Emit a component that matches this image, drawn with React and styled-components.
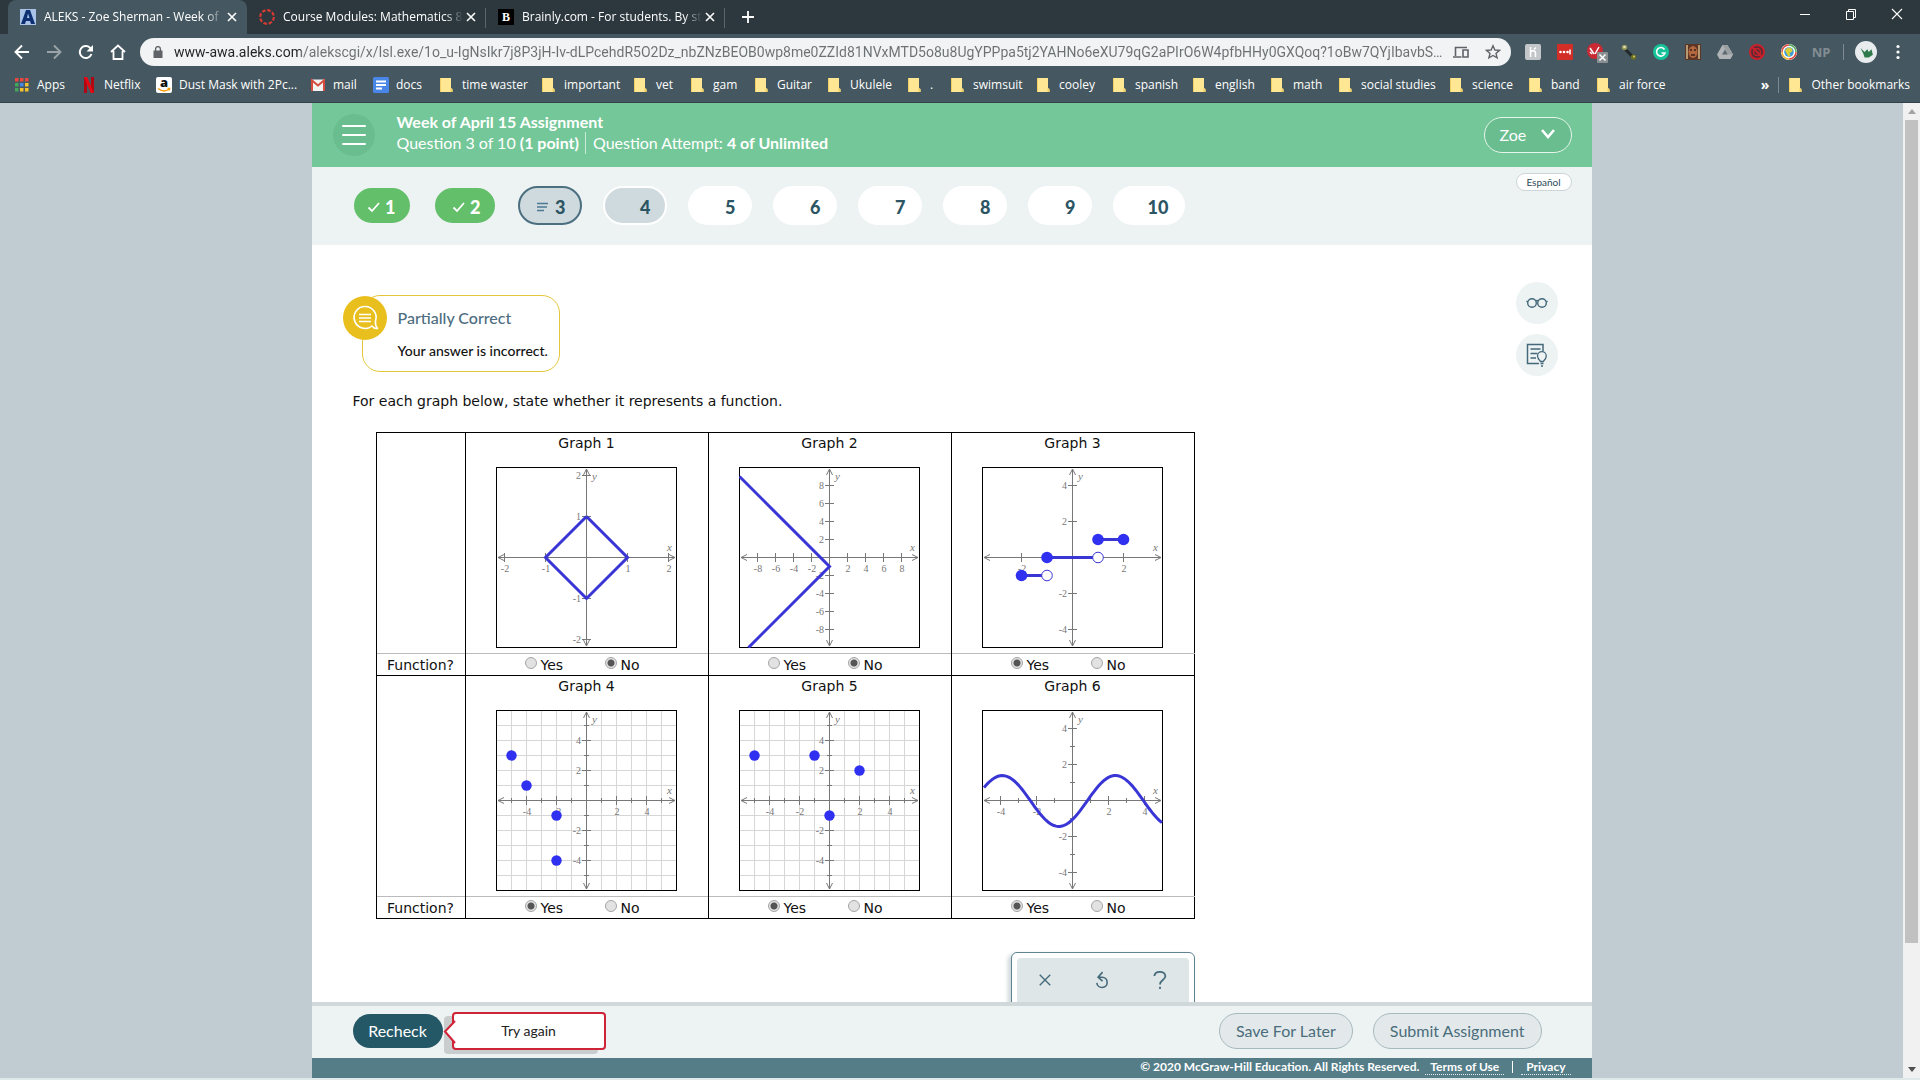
import React, { useState } from "react";
import styled, { createGlobalStyle, css } from "styled-components";

const ui = `"Open Sans", "Noto Sans", sans-serif`;
const brand = `Lato, "Open Sans", sans-serif`;
const verdana = `"DejaVu Sans", Verdana, sans-serif`;

const GlobalStyle = createGlobalStyle`
  *, *::before, *::after { box-sizing: border-box; }
  body { margin: 0; background: #e3ebec; }
  button { border: 0; padding: 0; margin: 0; background: none; font: inherit; color: inherit; cursor: pointer; }
  svg { display: block; }
`;

const Window = styled.div`
  display: flex;
  flex-direction: column;
  height: 100vh;
  border-bottom: 2px solid #dfe9ea;
  background: #c0ccd2;
`;

/* ---------- browser chrome ---------- */

const TabStrip = styled.div`
  display: flex;
  height: 34px;
  padding-left: 8px;
  background: #2c373e;
  font: 12px/16px ${ui};
  color: #fff;
`;

const Tab = styled.div`
  position: relative;
  display: flex;
  align-items: center;
  width: 239px;
  padding: 0 7px 0 12px;
  ${(p) =>
    p.$active
      ? css`
          background: #455760;
          border-radius: 8px 8px 0 0;
        `
      : css`
          &::after {
            content: "";
            position: absolute;
            right: 0;
            top: 8px;
            height: 20px;
            width: 1px;
            background: #59666d;
          }
        `}
`;

const TabTitle = styled.span`
  flex: 1;
  min-width: 0;
  margin-left: 8px;
  overflow: hidden;
  white-space: nowrap;
  mask-image: linear-gradient(90deg, #000 90%, transparent);
`;

const TabButton = styled.button`
  display: grid;
  place-items: center;
  width: 16px;
  height: 16px;
`;

const NewTab = styled.button`
  display: grid;
  place-items: center;
  width: 46px;
`;

const WindowControls = styled.div`
  display: flex;
  margin-left: auto;
  height: 28px;
`;

const WindowButton = styled.button`
  display: grid;
  place-items: center;
  width: 46px;
`;

const Toolbar = styled.div`
  display: flex;
  align-items: center;
  height: 36px;
  padding: 0 6px;
  background: #455760;
  color: #fff;
`;

const ToolButton = styled.button`
  display: grid;
  place-items: center;
  flex: none;
  width: 32px;
  height: 28px;
  opacity: ${(p) => (p.$dim ? 0.45 : 1)};
`;

const Omnibox = styled.div`
  display: flex;
  align-items: center;
  flex: 1;
  height: 28px;
  margin: 0 6px;
  padding: 0 2px 0 12px;
  border-radius: 14px;
  background: #f1f3f4;
  color: #5f6368;
`;

const UrlInput = styled.input`
  flex: 1;
  min-width: 0;
  margin-left: 10px;
  padding: 0;
  border: 0;
  outline: 0;
  font: 14px/20px Roboto, ${ui};
  text-overflow: ellipsis;
  color: transparent;
  background: linear-gradient(90deg, #202124 127px, #6c7073 127px);
  background-clip: text;
  -webkit-background-clip: text;
`;

const Divider = styled.span`
  width: 1px;
  height: 16px;
  margin: 0 ${(p) => p.$gap}px;
  background: #7d8a91;
`;

const Bookmarks = styled.nav`
  display: flex;
  align-items: center;
  height: 33px;
  padding: 0 10px 2px 14px;
  border-bottom: 1px solid #32414a;
  background: #455760;
  color: #fff;
  font: 12px/16px ${ui};
`;

const Bookmark = styled.a`
  display: flex;
  align-items: center;
  gap: 7px;
  flex: none;
  width: ${(p) => (p.$w ? p.$w + "px" : "auto")};
  color: inherit;
  text-decoration: none;
  white-space: nowrap;
`;

const Overflow = styled.button`
  margin-left: auto;
  font: 700 14px/16px ${ui};
`;

const Sv = ({ s = 16, children, ...r }) => (
  <svg width={s} height={s} viewBox="0 0 16 16" fill="none" stroke="currentColor" strokeWidth="1.6" aria-hidden="true" {...r}>
    {children}
  </svg>
);

const FolderIcon = () => (
  <Sv stroke="none">
    <path d="M1 1h11v10l1.500 1v3H1z" fill="#ffe793" />
    <path d="M1 1h1v14H1zM11.500 11.500l2 .5v3h-2z" fill="#f2cf62" />
  </Sv>
);

const AppsIcon = () => (
  <Sv stroke="none">
    {["#e8483f", "#e8483f", "#e8483f", "#43a65a", "#4a86e8", "#f2c230", "#43a65a", "#f2c230", "#f2c230"].map((c, i) => (
      <rect key={i} x={1 + (i % 3) * 5} y={1 + Math.floor(i / 3) * 5} width="3.500" height="3.500" fill={c} />
    ))}
  </Sv>
);
const NetflixIcon = () => (
  <Sv stroke="none">
    <path d="M3 0h3v16H3zM10 0h3v16h-3z" fill="#b20710" />
    <path d="M3 0h3.200L13 16H9.800z" fill="#e50914" />
  </Sv>
);
const AmazonIcon = () => (
  <Sv stroke="none">
    <rect width="16" height="16" rx="2" fill="#fff" />
    <text x="8" y="9.500" textAnchor="middle" fontFamily="Open Sans" fontWeight="800" fontSize="13" fill="#111">a</text>
    <path d="M2 11.500c4 3 8 3 11 .8M11.500 11.500h2.200l-.5 2" stroke="#f90" strokeWidth="1.300" fill="none" />
  </Sv>
);
const MailIcon = () => (
  <Sv stroke="none">
    <rect x="1" y="2.500" width="14" height="11.500" fill="#f2f2f2" />
    <path d="M2 14V3.500l6 5 6-5V14" stroke="#d54b3d" strokeWidth="2" fill="none" />
  </Sv>
);
const DocsIcon = () => (
  <Sv stroke="none">
    <rect width="16" height="16" rx="1.500" fill="#4a86e8" />
    <path d="M3 4.500h10M3 8h10M3 11.500h6" stroke="#fff" strokeWidth="1.800" />
  </Sv>
);

const icons = { apps: AppsIcon, netflix: NetflixIcon, amazon: AmazonIcon, mail: MailIcon, docs: DocsIcon };

const bookmarks = [
  ["Apps", 67, "apps"],
  ["Netflix", 75, "netflix"],
  ["Dust Mask with 2Pc...", 154, "amazon"],
  ["mail", 63, "mail"],
  ["docs", 66, "docs"],
  ["time waster", 102],
  ["important", 92],
  ["vet", 57],
  ["gam", 64],
  ["Guitar", 73],
  ["Ukulele", 80],
  [".", 43],
  ["swimsuit", 86],
  ["cooley", 76],
  ["spanish", 80],
  ["english", 78],
  ["math", 68],
  ["social studies", 111],
  ["science", 79],
  ["band", 68],
  ["air force", 90],
];

const CloseGlyph = () => (
  <Sv s={16}>
    <path d="M4 4l8 8M12 4l-8 8" />
  </Sv>
);

const NpText = styled.span`
  font: 700 13px/16px ${ui};
  color: #828d93;
`;

const Extensions = () => (
  <>
    <ToolButton aria-label="Honey">
      <Sv stroke="none"><rect width="16" height="16" rx="2" fill="#c3c7c9" /><path d="M5.500 3v10M5.500 9c0-3 5-3 5 0v4M9 5.500l2-2" stroke="#fff" strokeWidth="1.500" fill="none" /></Sv>
    </ToolButton>
    <ToolButton aria-label="LastPass">
      <Sv stroke="none"><rect width="16" height="16" rx="1" fill="#d32d27" /><circle cx="3.500" cy="8" r="1.300" fill="#fff" /><circle cx="7" cy="8" r="1.300" fill="#fff" /><circle cx="10.500" cy="8" r="1.300" fill="#fff" /><path d="M13 5.500v5" stroke="#fff" /></Sv>
    </ToolButton>
    <ToolButton aria-label="Blocked extension">
      <Sv s={22} viewBox="0 -2 22 22" stroke="none">
        <circle cx="9" cy="8" r="8" fill="#c92a34" /><path d="M4 5l4 6M4 9l2 2M9 11l4-7" stroke="#fff" strokeWidth="1.500" />
        <rect x="11" y="9" width="11" height="11" rx="1" fill="#8a8f92" /><path d="M13.500 11.500l6 6M19.500 11.500l-6 6" stroke="#fff" strokeWidth="1.500" />
      </Sv>
    </ToolButton>
    <ToolButton aria-label="Key">
      <Sv stroke="none"><path d="M3 4l9 9" stroke="#23282a" strokeWidth="3" /><circle cx="3.500" cy="3.500" r="2.800" fill="#8f9358" /><circle cx="3.500" cy="3" r="1.300" fill="#e1dfb8" /><circle cx="12.500" cy="13" r="2.600" fill="#6e7026" /><circle cx="13" cy="12.500" r="1" fill="#d5cf5a" /></Sv>
    </ToolButton>
    <ToolButton aria-label="Grammarly">
      <Sv stroke="none"><circle cx="8" cy="8" r="8" fill="#15c39a" /><path d="M11.500 5.500A4.300 4.300 0 1 0 12 9H8.500" stroke="#fff" strokeWidth="1.600" fill="none" /></Sv>
    </ToolButton>
    <ToolButton aria-label="Portrait">
      <Sv stroke="none"><rect width="16" height="16" fill="#5c3524" /><path d="M1 1h2v14H1zM13 1h2v14h-2z" fill="#b79a74" /><ellipse cx="8" cy="8" rx="4.500" ry="6" fill="#b2673f" /><path d="M5 6h2M9 6h2M6 11h4" stroke="#3c2017" /></Sv>
    </ToolButton>
    <ToolButton aria-label="Drive">
      <Sv stroke="none"><path d="M5.500 1h5L16 10.500 13.500 15h-11L0 10.500z" fill="#b1b5b7" /><path d="M8 5.500l3 5H5z" fill="#5c6970" /><path d="M10.500 1L16 10.500h-5L5.500 1z" fill="#9a9fa2" /></Sv>
    </ToolButton>
    <ToolButton aria-label="Ad blocker">
      <Sv stroke="none"><circle cx="8" cy="8" r="7" stroke="#c9202c" strokeWidth="2" fill="#5a2a31" /><circle cx="8" cy="8" r="3.500" stroke="#c9202c" strokeWidth="1.500" /><path d="M3 3l10 10" stroke="#c9202c" strokeWidth="1.800" /></Sv>
    </ToolButton>
    <ToolButton aria-label="Globe">
      <Sv stroke="none"><circle cx="8" cy="8" r="8" fill="#fff" /><path d="M8 1a7 7 0 0 1 7 7" stroke="#4aa84f" strokeWidth="1.500" /><path d="M15 8a7 7 0 0 1-7 7M8 1a7 7 0 0 0-7 7" stroke="#e0483c" strokeWidth="1.500" /><path d="M1 8a7 7 0 0 0 7 7" stroke="#f2b32e" strokeWidth="1.500" /><circle cx="8" cy="8" r="4.800" fill="#3b9ad8" /><path d="M4 6l3-2.500 4 1 .5 3-3 1.500 1 2.500-2 1-2-3z" fill="#d8cf3c" /></Sv>
    </ToolButton>
    <ToolButton aria-label="NP">
      <NpText>NP</NpText>
    </ToolButton>
  </>
);

/* ---------- page ---------- */

const Viewport = styled.div`
  display: flex;
  flex: 1;
  min-height: 0;
`;

const Page = styled.main`
  display: flex;
  flex-direction: column;
  flex: 1;
  max-width: 1280px;
  margin: 0 auto;
  background: #fff;
`;

const ScrollTrack = styled.div`
  display: flex;
  flex-direction: column;
  width: 17px;
  background: #f1f1f1;
`;
const ScrollArrow = styled.button`
  display: grid;
  place-items: center;
  height: 17px;
`;
const ScrollThumb = styled.div`
  flex: 7 1 0;
  margin: 0 2px;
  background: #c1c1c1;
`;
const ScrollRest = styled.div`
  flex: 1 1 0;
`;

const Header = styled.header`
  display: flex;
  align-items: center;
  flex: none;
  height: 64px;
  padding: 0 20px 0 21px;
  background: #74c798;
  color: #fff;
  font-family: ${brand};
`;

const MenuButton = styled.button`
  display: grid;
  place-items: center;
  width: 42px;
  height: 42px;
  border-radius: 50%;
  background: #6abd8f;
`;

const HeaderText = styled.div`
  flex: 1;
  padding: 0 0 4px 22px;
`;
const HeaderTitle = styled.h1`
  margin: 0;
  font-size: 16px;
  line-height: 20px;
  font-weight: 700;
`;
const HeaderLine = styled.p`
  display: flex;
  align-items: center;
  margin: 0;
  font-size: 16px;
  line-height: 22px;
  white-space: pre;
`;
const Attempt = styled.span`
  margin-left: 6px;
  padding-left: 7px;
  border-left: 1px solid #c9ead7;
`;

const UserButton = styled.button`
  display: flex;
  align-items: center;
  justify-content: space-between;
  width: 88px;
  height: 36px;
  padding: 0 16px 2px 15px;
  border: 1px solid #e6f6ec;
  border-radius: 18px;
  background: #6abd8f;
  font-size: 16px;
`;

const QuestionBar = styled.nav`
  display: flex;
  align-items: flex-start;
  flex: none;
  gap: 21px;
  height: 78px;
  padding: 6px 20px 0 40px;
  background: #edf2f3;
  font-family: ${brand};
`;

const pillTones = {
  done: css`
    background: #63bf6a;
    color: #fff;
    border-color: #edf2f3;
  `,
  current: css`
    background: #cfdade;
    border-color: #4c6f80;
  `,
  seen: css`
    background: #cfdade;
    border-color: #fff;
  `,
  open: css`
    background: #fff;
    border-color: #fff;
  `,
};

const Pill = styled.button`
  display: flex;
  align-items: center;
  justify-content: flex-end;
  gap: 4px;
  width: ${(p) => p.$w}px;
  height: 39px;
  margin-top: 13px;
  padding: 2px 14px 0 0;
  border: 2px solid;
  border-radius: 20px;
  font-size: 18px;
  font-weight: 900;
  color: #2c5563;
  ${(p) => pillTones[p.$tone]}
`;

const LanguageButton = styled.button`
  width: 56px;
  height: 18px;
  margin-left: auto;
  border: 1px solid #cdd5d8;
  border-radius: 9px;
  background: #fff;
  color: #2c4a56;
  font-size: 10px;
  line-height: 14px;
`;

const Body = styled.div`
  display: flex;
  flex: 1;
  min-height: 0;
  overflow: hidden;
  padding: 37px 34px 0 41px;
`;

const Work = styled.section`
  display: flex;
  flex-direction: column;
  align-items: flex-start;
  padding-top: 13px;
`;

const Side = styled.aside`
  display: flex;
  flex-direction: column;
  gap: 10px;
  margin-left: auto;
`;

const RoundButton = styled.button`
  display: grid;
  place-items: center;
  width: 42px;
  height: 42px;
  border-radius: 50%;
  background: #edf2f3;
  color: #44697a;
`;

const Feedback = styled.div`
  position: relative;
  flex: none;
  width: 198px;
  height: 77px;
  margin-left: 9px;
  padding: 12px 0 0 35px;
  border: 1px solid #e5c63a;
  border-radius: 18px;
  font-family: ${brand};
`;

const FeedbackBadge = styled.span`
  position: absolute;
  left: -20px;
  top: 0;
  display: grid;
  place-items: center;
  width: 44px;
  height: 44px;
  border-radius: 50%;
  background: #e9bf1e;
  color: #fff;
`;

const FeedbackTitle = styled.h2`
  margin: 0 0 13px;
  font-size: 16px;
  line-height: 20px;
  font-weight: 500;
  color: #4d6d80;
`;
const FeedbackText = styled.p`
  margin: 0;
  font-size: 14px;
  line-height: 20px;
  font-weight: 500;
  white-space: nowrap;
  color: #111;
`;

const Prompt = styled.p`
  margin: 19px 0 21px;
  font: 14px/20px ${verdana};
  color: #111;
`;

const Grid = styled.table`
  flex: none;
  margin-left: 23px;
  border-collapse: collapse;
  border: 1px solid #000;
  font: 14px/20px ${verdana};
  color: #111;
`;
const LabelCell = styled.th`
  width: 89px;
  padding: 0;
  border: solid #000;
  border-width: 0 1px;
  font-weight: 400;
`;
const GraphCell = styled.td`
  width: 243px;
  height: 221px;
  padding: 0;
  vertical-align: top;
  text-align: center;
  border-left: 1px solid #000;
`;
const GraphRow = styled.tr`
  border-top: 1px solid #000;
`;
const AnswerRow = styled.tr`
  border-top: 1px solid #bbb;
`;
const AnswerCell = styled.td`
  height: 22px;
  padding: 0;
  border-left: 1px solid #000;
`;
const GraphTitle = styled.div`
  height: 34px;
`;
const Canvas = styled.svg`
  margin: 0 auto;
`;
const Choices = styled.div`
  display: flex;
  align-items: center;
  height: 21px;
  padding-left: 59px;
`;
const Choice = styled.label`
  display: flex;
  align-items: center;
  gap: 4px;
  width: 80px;
`;
const Radio = styled.input`
  appearance: none;
  width: 12px;
  height: 12px;
  margin: 0 0 3px;
  border: 1px solid #a5a5a5;
  border-radius: 50%;
  background: #e2e2e2;
  &:checked {
    background: radial-gradient(circle, #555 0 3px, #e2e2e2 4px);
  }
`;

const Tools = styled.div`
  align-self: flex-end;
  display: flex;
  flex: none;
  width: 184px;
  height: 70px;
  margin-top: 33px;
  padding: 5px;
  border: 1px solid #5f8391;
  border-radius: 6px 6px 0 0;
  background: #fff;
  box-shadow: -3px 2px 4px #cdd6d9;
`;
const ToolsInner = styled.div`
  display: flex;
  flex: 1;
  padding-bottom: 10px;
  border-radius: 4px 4px 0 0;
  background: #dee6e8;
  color: #44697a;
`;
const ToolsButton = styled.button`
  display: grid;
  place-items: center;
  flex: 1;
  height: 44px;
`;

const ActionBar = styled.div`
  display: flex;
  align-items: center;
  flex: none;
  height: 56px;
  padding: 0 50px 2px 41px;
  border-top: 4px solid #d1d8da;
  background: #edf2f2;
  font-family: ${brand};
`;
const Recheck = styled.button`
  width: 90px;
  height: 34px;
  padding-bottom: 2px;
  border-radius: 17px;
  background: #255866;
  color: #fff;
  font-size: 16px;
`;
const Tooltip = styled.div`
  position: relative;
  display: grid;
  place-items: center;
  width: 154px;
  height: 38px;
  margin-left: 9px;
  padding-bottom: 2px;
  border: 2px solid #cf2338;
  border-radius: 4px;
  background: #fff;
  box-shadow: -8px 4px 0 #c9cdce;
  font-size: 14px;
  color: #222;
`;
const Tip = styled.svg`
  position: absolute;
  left: -11px;
  top: 6px;
`;
const Actions = styled.div`
  display: flex;
  gap: 20px;
  margin-left: auto;
`;
const Secondary = styled.button`
  height: 36px;
  padding: 0 16px 2px;
  border: 1px solid #a6b9bf;
  border-radius: 18px;
  background: #e3e9ea;
  color: #4a6d7c;
  font-size: 16px;
`;

const Legal = styled.footer`
  display: flex;
  align-items: center;
  justify-content: flex-end;
  flex: none;
  height: 20px;
  padding: 0 21px 2px 0;
  background: #547d88;
  color: #fff;
  font: 700 12px/14px ${brand};
`;
const LegalLink = styled.a`
  padding: 0 5px;
  border-bottom: 1px dotted #e3ecee;
  color: inherit;
  text-decoration: none;
`;
const LegalCopy = styled.span`
  margin-right: 6px;
`;
const LegalBar = styled.span`
  width: 1px;
  height: 12px;
  margin: 0 8px;
  background: #fff;
`;

/* ---------- graphs ---------- */

const C = 91;
const blue = "#3a36d6";
const range = (lim) => Array.from({ length: lim * 2 + 1 }, (_, i) => i - lim).filter((n) => n !== 0);

const wave = (u) => {
  let d = "";
  for (let i = -89; i <= 89; i += 2) {
    const x = i / u;
    d += `${d ? "L" : "M"}${C + i} ${(C - u * (Math.sin(x) - Math.cos(x))).toFixed(2)}`;
  }
  return d;
};

const graphs = [
  { id: 1, ux: 41, uy: 41, label: [-2, -1, 1, 2], lines: [[[0, 1], [1, 0], [0, -1], [-1, 0], [0, 1]]], answer: "No" },
  { id: 2, ux: 9, uy: 9, label: [-8, -6, -4, -2, 2, 4, 6, 8], lines: [[[-10, 9], [0, -1], [-9, -10]]], answer: "No" },
  {
    id: 3, ux: 25.5, uy: 18, label: [-4, -2, 2, 4], xlabel: [-2, 2],
    lines: [[[-2, -1], [-1, -1]], [[-1, 0], [1, 0]], [[1, 1], [2, 1]]],
    dots: [[-2, -1], [-1, 0], [1, 1], [2, 1]], holes: [[-1, -1], [1, 0]], answer: "Yes",
  },
  { id: 4, ux: 15, uy: 15, grid: 5, label: [-4, -2, 2, 4], minor: 5, dots: [[-5, 3], [-4, 1], [-2, -1], [-2, -4]], answer: "Yes" },
  { id: 5, ux: 15, uy: 15, grid: 5, label: [-4, -2, 2, 4], minor: 5, dots: [[-5, 3], [-1, 3], [2, 2], [0, -1]], answer: "Yes" },
  { id: 6, ux: 18, uy: 18, label: [-4, -2, 2, 4], minor: 4, path: wave(18), answer: "Yes" },
];

const Graph = ({ g }) => {
  const X = (v) => C + v * g.ux;
  const Y = (v) => C - v * g.uy;
  const xl = g.xlabel || g.label;
  return (
    <Canvas width="181" height="181" viewBox="0 0 181 181" role="img" aria-label={`Graph ${g.id}`}>
      <rect x="0.500" y="0.500" width="180" height="180" fill="#fff" stroke="#000" />
      {g.grid && (
        <g stroke="#d6d6d6">
          {range(g.grid).map((n) => (
            <path key={n} d={`M${X(n) - 0.5} 1v179M1 ${Y(n) - 0.5}h179`} />
          ))}
        </g>
      )}
      <g stroke="#777" fill="none">
        <path d="M2 90.500h177M90.500 2v177" />
        <path d="M8 87.500l-6 3 6 3M173 87.500l6 3-6 3M87.500 8l3-6 3 6M87.500 173l3 6 3-6" />
        {xl.map((n) => <path key={"x" + n} d={`M${X(n) - 0.5} 86v9`} />)}
        {g.label.map((n) => <path key={"y" + n} d={`M86 ${Y(n) - 0.5}h9`} />)}
        {g.minor && range(g.minor).map((n) => <path key={n} d={`M${X(n) - 0.5} 88v5M88 ${Y(n) - 0.5}h5`} />)}
      </g>
      <g fill="#777" fontFamily="Liberation Serif, Times New Roman, serif" fontSize="10">
        {xl.map((n) => <text key={"x" + n} x={X(n)} y="105" textAnchor="middle">{n}</text>)}
        {g.label.map((n) => <text key={"y" + n} x="85" y={Y(n) + 3} textAnchor="end">{n}</text>)}
        <text x="96" y="13" fontStyle="italic" fontSize="11">y</text>
        <text x="171" y="84" fontStyle="italic" fontSize="11">x</text>
      </g>
      <g stroke={blue} strokeWidth="3" fill="none">
        {(g.lines || []).map((l, i) => <polyline key={i} points={l.map(([x, y]) => `${X(x) - 0.5},${Y(y) - 0.5}`).join(" ")} />)}
        {g.path && <path d={g.path} />}
      </g>
      {(g.dots || []).map(([x, y], i) => <circle key={i} cx={X(x) - 0.5} cy={Y(y) - 0.5} r={g.holes ? 5.8 : 5.2} fill="#3030f0" />)}
      {(g.holes || []).map(([x, y], i) => <circle key={i} cx={X(x) - 0.5} cy={Y(y) - 0.5} r="5.300" fill="#fff" stroke={blue} />)}
    </Canvas>
  );
};

const pills = [
  [1, 60, "done"], [2, 64, "done"], [3, 64, "current"], [4, 64, "seen"], [5, 64, "open"],
  [6, 64, "open"], [7, 64, "open"], [8, 64, "open"], [9, 64, "open"], [10, 72, "open"],
];

const PillIcon = ({ tone }) =>
  tone === "done" ? (
    <svg width="14" height="12" viewBox="0 0 14 12" fill="none" stroke="currentColor" strokeWidth="1.800"><path d="M1.500 6.500l3.500 3.500L12 2" /></svg>
  ) : tone === "current" ? (
    <svg width="14" height="12" viewBox="0 0 14 12" stroke="#4c7a93" strokeWidth="1.300"><path d="M0 2.500h11M0 6h10M0 9.500h7" /></svg>
  ) : null;

const url =
  "www-awa.aleks.com/alekscgi/x/Isl.exe/1o_u-IgNsIkr7j8P3jH-Iv-dLPcehdR5O2Dz_nbZNzBEOB0wp8me0ZZId81NVxMTD5o8u8UgYPPpa5tj2YAHNo6eXU79qG2aPIrO6W4pfbHHy0GXQoq?1oBw7QYjIbavbSPX...";

export default function App() {
  const [answers, setAnswers] = useState(() => Object.fromEntries(graphs.map((g) => [g.id, g.answer])));
  const rows = [graphs.slice(0, 3), graphs.slice(3)];

  return (
    <>
      <GlobalStyle />
      <Window>
        <TabStrip>
          <Tab $active>
            <Sv stroke="none"><rect width="16" height="16" fill="#a9c3e8" /><path d="M1 15L6 1h4l5 14h-4l-1-3H6l-1 3zM7 9h2.500L8 4.500z" fill="#0f2f73" fillRule="evenodd" /></Sv>
            <TabTitle>ALEKS - Zoe Sherman - Week of</TabTitle>
            <TabButton aria-label="Close tab"><CloseGlyph /></TabButton>
          </Tab>
          <Tab>
            <Sv><circle cx="8" cy="8" r="6.800" stroke="#d63b31" strokeWidth="2.200" strokeDasharray="3.600 1.740" /></Sv>
            <TabTitle>Course Modules: Mathematics 8</TabTitle>
            <TabButton aria-label="Close tab"><CloseGlyph /></TabButton>
          </Tab>
          <Tab>
            <Sv stroke="none"><rect width="16" height="16" fill="#000" /><text x="8" y="12" textAnchor="middle" fill="#fff" fontFamily="Liberation Serif" fontWeight="700" fontSize="12">B</text></Sv>
            <TabTitle>Brainly.com - For students. By stu</TabTitle>
            <TabButton aria-label="Close tab"><CloseGlyph /></TabButton>
          </Tab>
          <NewTab aria-label="New tab"><Sv><path d="M8 2v12M2 8h12" strokeWidth="1.800" /></Sv></NewTab>
          <WindowControls>
            <WindowButton aria-label="Minimize"><Sv><path d="M3 8.500h10" strokeWidth="1" /></Sv></WindowButton>
            <WindowButton aria-label="Restore"><Sv strokeWidth="1"><path d="M3.500 5.500h7v8h-7zM5.500 5.500v-2h7v8h-2" /></Sv></WindowButton>
            <WindowButton aria-label="Close"><Sv strokeWidth="1.100"><path d="M3 3l10 10M13 3L3 13" /></Sv></WindowButton>
          </WindowControls>
        </TabStrip>

        <Toolbar>
          <ToolButton aria-label="Back"><Sv><path d="M15 8H2M8 1.500L1.500 8 8 14.500" strokeWidth="1.900" /></Sv></ToolButton>
          <ToolButton $dim aria-label="Forward"><Sv><path d="M1 8h13M8 1.500L14.500 8 8 14.500" strokeWidth="1.900" /></Sv></ToolButton>
          <ToolButton aria-label="Reload"><Sv><path d="M13.500 10A6 6 0 1 1 12 3.700L14 5.500" strokeWidth="2" /><path d="M15 1v6.500H8.500z" fill="currentColor" stroke="none" /></Sv></ToolButton>
          <ToolButton aria-label="Home"><Sv><path d="M1 8l7-6.500L15 8M3.500 7v8h9V7" strokeWidth="1.800" /></Sv></ToolButton>
          <Omnibox>
            <Sv s={12} stroke="none"><path d="M2 6h12v10H2z" fill="currentColor" /><path d="M4.800 7V4a3.200 3.200 0 0 1 6.400 0v3" stroke="currentColor" strokeWidth="1.800" /></Sv>
            <UrlInput aria-label="Address" defaultValue={url} />
            <ToolButton aria-label="Send to device"><Sv><path d="M2.500 12V3.500H14M0 13h8.500M10 6h5v7h-5z" /></Sv></ToolButton>
            <ToolButton aria-label="Bookmark this page"><Sv><path d="M8 1.800l1.900 4.200 4.600.4-3.500 3 1.100 4.500L8 11.500l-4.100 2.400L5 9.400l-3.500-3 4.600-.4z" strokeWidth="1.400" /></Sv></ToolButton>
          </Omnibox>
          <Extensions />
          <Divider $gap={6} />
          <ToolButton aria-label="Profile">
            <Sv s={22} stroke="none"><circle cx="8" cy="8" r="8" fill="#e8ecee" /><path d="M4 5l3 3 2-2 1 2 2-2 1 4-3 2H7L6 9z" fill="#2f7a4c" /></Sv>
          </ToolButton>
          <ToolButton aria-label="Menu"><Sv stroke="none" fill="currentColor"><circle cx="8" cy="2.500" r="1.600" /><circle cx="8" cy="8" r="1.600" /><circle cx="8" cy="13.500" r="1.600" /></Sv></ToolButton>
        </Toolbar>

        <Bookmarks aria-label="Bookmarks">
          {bookmarks.map(([name, w, icon]) => {
            const Icon = icons[icon] || FolderIcon;
            return (
              <Bookmark key={name} href="#" $w={w}>
                <Icon />
                {name}
              </Bookmark>
            );
          })}
          <Overflow aria-label="More bookmarks">»</Overflow>
          <Divider $gap={9} />
          <Bookmark href="#"><FolderIcon />Other bookmarks</Bookmark>
        </Bookmarks>

        <Viewport>
          <Page>
            <Header>
              <MenuButton aria-label="Menu">
                <svg width="24" height="22" viewBox="0 0 24 22" stroke="#fff" strokeWidth="2" strokeLinecap="round"><path d="M1 2h22M1 11h22M1 20h22" /></svg>
              </MenuButton>
              <HeaderText>
                <HeaderTitle>Week of April 15 Assignment</HeaderTitle>
                <HeaderLine>
                  <span>Question 3 of 10 <b>(1 point)</b></span>
                  <Attempt>Question Attempt: <b>4 of Unlimited</b></Attempt>
                </HeaderLine>
              </HeaderText>
              <UserButton aria-haspopup="menu">
                Zoe
                <svg width="14" height="10" viewBox="0 0 14 10" fill="none" stroke="#fff" strokeWidth="2.600"><path d="M1 1l6 7 6-7" /></svg>
              </UserButton>
            </Header>

            <QuestionBar aria-label="Questions">
              {pills.map(([n, w, tone]) => (
                <Pill key={n} $w={w} $tone={tone}>
                  <PillIcon tone={tone} />
                  {n}
                </Pill>
              ))}
              <LanguageButton>Español</LanguageButton>
            </QuestionBar>

            <Body>
              <Work>
                <Feedback>
                  <FeedbackBadge>
                    <svg width="28" height="28" viewBox="0 0 28 28" fill="none" stroke="#fff" strokeWidth="1.600"><path d="M21 22a11 11 0 1 1 3.500-5c-.5 3 .5 5.500 2 7.500-2 .3-4-.5-5.500-2.500z" strokeLinejoin="round" /><path d="M8 10.500h12M8 14h12M8 17.500h12" /></svg>
                  </FeedbackBadge>
                  <FeedbackTitle>Partially Correct</FeedbackTitle>
                  <FeedbackText>Your answer is incorrect.</FeedbackText>
                </Feedback>
                <Prompt>For each graph below, state whether it represents a function.</Prompt>
                <Grid>
                  <tbody>
                    {rows.map((row, r) => (
                      <React.Fragment key={r}>
                        <GraphRow>
                          <LabelCell />
                          {row.map((g) => (
                            <GraphCell key={g.id}>
                              <GraphTitle>Graph {g.id}</GraphTitle>
                              <Graph g={g} />
                            </GraphCell>
                          ))}
                        </GraphRow>
                        <AnswerRow>
                          <LabelCell scope="row">Function?</LabelCell>
                          {row.map((g) => (
                            <AnswerCell key={g.id}>
                              <Choices>
                                {["Yes", "No"].map((v) => (
                                  <Choice key={v}>
                                    <Radio
                                      type="radio"
                                      name={`graph-${g.id}`}
                                      checked={answers[g.id] === v}
                                      onChange={() => setAnswers({ ...answers, [g.id]: v })}
                                    />
                                    {v}
                                  </Choice>
                                ))}
                              </Choices>
                            </AnswerCell>
                          ))}
                        </AnswerRow>
                      </React.Fragment>
                    ))}
                  </tbody>
                </Grid>
                <Tools>
                  <ToolsInner>
                    <ToolsButton aria-label="Clear"><Sv s={14}><path d="M2 2l12 12M14 2L2 14" /></Sv></ToolsButton>
                    <ToolsButton aria-label="Undo"><Sv s={18}><path d="M5 5.500H8a4.600 4.600 0 1 1-4.600 5M8.500 1L4.500 5.500l4 3.500" strokeWidth="1.400" /></Sv></ToolsButton>
                    <ToolsButton aria-label="Help"><Sv s={20}><path d="M3.500 4.800C4 .2 12.300.4 12.300 5c0 3-4.300 3-4.300 6.500M8 13.300v1.900" strokeWidth="1.400" /></Sv></ToolsButton>
                  </ToolsInner>
                </Tools>
              </Work>
              <Side>
                <RoundButton aria-label="Reading mode">
                  <svg width="22" height="12" viewBox="0 0 22 12" fill="none" stroke="currentColor" strokeWidth="1.400"><circle cx="6" cy="6" r="4.300" /><circle cx="16" cy="6" r="4.300" /><path d="M9.500 4c1-.8 2-.8 3 0M1.700 5L.5 4M20.300 5l1.200-1" /></svg>
                </RoundButton>
                <RoundButton aria-label="Explanation">
                  <svg width="22" height="24" viewBox="0 0 22 24" fill="none" stroke="currentColor" strokeWidth="1.500"><path d="M17 8V1.500H1.500v19H13M4.500 6h10M4.500 10.500h7M4.500 15h5.500" /><path d="M14.500 18.500c-2-2-3-3.500-3-5.500a4.400 4.400 0 0 1 8.800 0c0 2-1 3.500-3 5.500zM14.500 20.500h3M15 23h2" strokeWidth="1.300" /></svg>
                </RoundButton>
              </Side>
            </Body>

            <ActionBar>
              <Recheck>Recheck</Recheck>
              <Tooltip role="status">
                <Tip width="13" height="24" viewBox="0 0 13 24"><path d="M12 1L2 11.500 12 23" fill="#fff" stroke="#cf2338" strokeWidth="2" /></Tip>
                Try again
              </Tooltip>
              <Actions>
                <Secondary>Save For Later</Secondary>
                <Secondary>Submit Assignment</Secondary>
              </Actions>
            </ActionBar>
            <Legal>
              <LegalCopy>© 2020 McGraw-Hill Education. All Rights Reserved.</LegalCopy>
              <LegalLink href="#">Terms of Use</LegalLink>
              <LegalBar />
              <LegalLink href="#">Privacy</LegalLink>
            </Legal>
          </Page>
          <ScrollTrack>
            <ScrollArrow aria-label="Scroll up"><svg width="8" height="5" viewBox="0 0 8 5"><path d="M0 5l4-5 4 5z" fill="#a3a3a3" /></svg></ScrollArrow>
            <ScrollThumb />
            <ScrollRest />
            <ScrollArrow aria-label="Scroll down"><svg width="8" height="5" viewBox="0 0 8 5"><path d="M0 0l4 5 4-5z" fill="#505050" /></svg></ScrollArrow>
          </ScrollTrack>
        </Viewport>
      </Window>
    </>
  );
}
